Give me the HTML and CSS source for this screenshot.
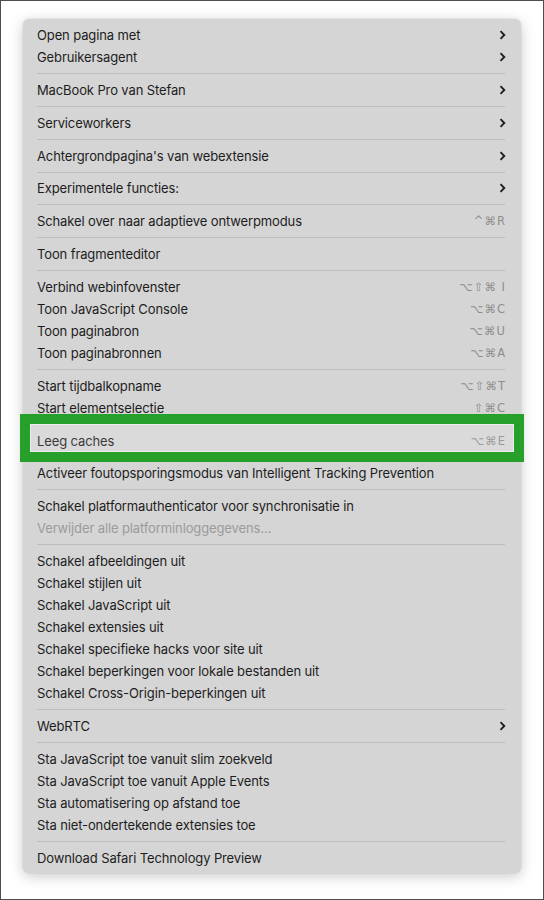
FILE: index.html
```html
<!DOCTYPE html>
<html lang="nl">

<head>
    <meta charset="UTF-8">
    <meta name="viewport" content="width=device-width, initial-scale=1.0">
    <title>Ontwikkel-menu</title>
    <link rel="stylesheet" href="styles.css">
</head>

<body>
    <div class="frame">
        <div class="menu">
            <div class="item"><span>Open pagina met</span><svg class="chevron" viewBox="0 0 7 10"><path d="M1.5 1.2 L5.3 5 L1.5 8.8"/></svg></div>
            <div class="item"><span>Gebruikersagent</span><svg class="chevron" viewBox="0 0 7 10"><path d="M1.5 1.2 L5.3 5 L1.5 8.8"/></svg></div>
            <div class="separator"></div>
            <div class="item"><span>MacBook Pro van Stefan</span><svg class="chevron" viewBox="0 0 7 10"><path d="M1.5 1.2 L5.3 5 L1.5 8.8"/></svg></div>
            <div class="separator"></div>
            <div class="item"><span>Serviceworkers</span><svg class="chevron" viewBox="0 0 7 10"><path d="M1.5 1.2 L5.3 5 L1.5 8.8"/></svg></div>
            <div class="separator"></div>
            <div class="item"><span>Achtergrondpagina's van webextensie</span><svg class="chevron" viewBox="0 0 7 10"><path d="M1.5 1.2 L5.3 5 L1.5 8.8"/></svg></div>
            <div class="separator"></div>
            <div class="item"><span>Experimentele functies:</span><svg class="chevron" viewBox="0 0 7 10"><path d="M1.5 1.2 L5.3 5 L1.5 8.8"/></svg></div>
            <div class="separator"></div>
            <div class="item"><span>Schakel over naar adaptieve ontwerpmodus</span><span class="shortcut">^⌘R</span></div>
            <div class="separator"></div>
            <div class="item"><span>Toon fragmenteditor</span></div>
            <div class="separator"></div>
            <div class="item"><span>Verbind webinfovenster</span><span class="shortcut">⌥⇧⌘ I</span></div>
            <div class="item"><span>Toon JavaScript Console</span><span class="shortcut">⌥⌘C</span></div>
            <div class="item"><span>Toon paginabron</span><span class="shortcut">⌥⌘U</span></div>
            <div class="item"><span>Toon paginabronnen</span><span class="shortcut">⌥⌘A</span></div>
            <div class="separator"></div>
            <div class="item"><span>Start tijdbalkopname</span><span class="shortcut">⌥⇧⌘T</span></div>
            <div class="item"><span>Start elementselectie</span><span class="shortcut">⇧⌘C</span></div>
            <div class="separator"></div>
            <div class="item highlighted"><span>Leeg caches</span><span class="shortcut">⌥⌘E</span></div>
            <div class="separator"></div>
            <div class="item"><span>Activeer foutopsporingsmodus van Intelligent Tracking Prevention</span></div>
            <div class="separator"></div>
            <div class="item"><span>Schakel platformauthenticator voor synchronisatie in</span></div>
            <div class="item disabled"><span>Verwijder alle platforminloggegevens…</span></div>
            <div class="separator"></div>
            <div class="item"><span>Schakel afbeeldingen uit</span></div>
            <div class="item"><span>Schakel stijlen uit</span></div>
            <div class="item"><span>Schakel JavaScript uit</span></div>
            <div class="item"><span>Schakel extensies uit</span></div>
            <div class="item"><span>Schakel specifieke hacks voor site uit</span></div>
            <div class="item"><span>Schakel beperkingen voor lokale bestanden uit</span></div>
            <div class="item"><span>Schakel Cross-Origin-beperkingen uit</span></div>
            <div class="separator"></div>
            <div class="item"><span>WebRTC</span><svg class="chevron" viewBox="0 0 7 10"><path d="M1.5 1.2 L5.3 5 L1.5 8.8"/></svg></div>
            <div class="separator"></div>
            <div class="item"><span>Sta JavaScript toe vanuit slim zoekveld</span></div>
            <div class="item"><span>Sta JavaScript toe vanuit Apple Events</span></div>
            <div class="item"><span>Sta automatisering op afstand toe</span></div>
            <div class="item"><span>Sta niet-ondertekende extensies toe</span></div>
            <div class="separator"></div>
            <div class="item"><span>Download Safari Technology Preview</span></div>
        </div>
    </div>
</body>

</html>
```

FILE: styles.css
```css
body {
    margin: 0;
    background: #fff;
    font-family: Inter, "Liberation Sans", Arial, sans-serif;
}

.frame {
    box-sizing: border-box;
    width: 544px;
    height: 900px;
    border: 1px solid #4d4d4d;
    padding: 18px 0 0 22px;
}

.menu {
    width: 498px;
    box-sizing: border-box;
    padding: 5px 16px 4px 14px;
    background: #d5d5d5;
    border-radius: 6px;
    box-shadow: 0 3px 14px rgba(0, 0, 0, 0.22), 0 0 0 1px rgba(0, 0, 0, 0.04);
}

.item {
    display: flex;
    align-items: center;
    justify-content: space-between;
    height: 22px;
    font-size: 13px;
    color: #1d1d1d;
    letter-spacing: -0.12px;
}

.item.disabled {
    color: #9b9b9b;
}

.shortcut {
    font-family: "DejaVu Sans", sans-serif;
    font-size: 11.5px;
    color: #8d8d8d;
    letter-spacing: 1px;
    margin-right: -1px;
}

.chevron {
    width: 7px;
    height: 10px;
    margin-right: -1px;
}

.chevron path {
    fill: none;
    stroke: #1f1f1f;
    stroke-width: 1.9;
}

.separator {
    height: 1px;
    margin: 5px 0 4.85px;
    background: #bdbdbd;
}

/* green marker around "Leeg caches" */
.highlighted {
    position: relative;
}

.highlighted::after {
    content: "";
    position: absolute;
    left: -17px;
    right: -19px;
    top: -16px;
    bottom: -10px;
    border: 10px solid #26a02a;
    box-shadow: inset 0 0 0 1px #ededed;
    background: rgba(255, 255, 255, 0.12);
    pointer-events: none;
}
```
